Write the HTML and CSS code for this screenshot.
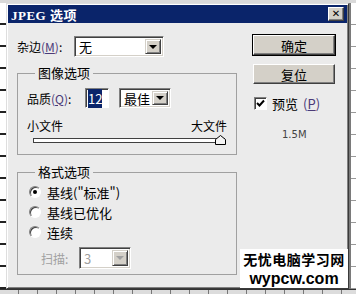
FILE: index.html
```
<!DOCTYPE html>
<html lang="zh-CN">
<head>
    <meta charset="UTF-8">
    <title>JPEG 选项</title>
    <link rel="stylesheet" href="styles.css">
</head>
<body>
    <div class="screen">
        <div class="top-strip"></div>
        <div class="middle">
            <div class="sheet sheet-left"></div>
            <div class="dialog">
                <div class="title-bar">
                    <span class="title-text">JPEG 选项</span>
                    <span class="close-btn">&#x2715;</span>
                </div>
                <div class="dialog-body">
                    <div class="left-col">
                        <div class="matte-row">
                            <span class="matte-label">杂边<span class="key">(<u>M</u>)</span>:</span>
                            <div class="combo combo-matte">
                                <span class="combo-text">无</span>
                                <span class="combo-btn"><i class="arrow"></i></span>
                            </div>
                        </div>

                        <fieldset class="group group-image">
                            <legend>图像选项</legend>
                            <div class="quality-row">
                                <span class="quality-label">品质<span class="key">(<u>Q</u>)</span>:</span>
                                <div class="edit"><span class="sel">12</span></div>
                                <div class="combo combo-quality">
                                    <span class="combo-text">最佳</span>
                                    <span class="combo-btn"><i class="arrow"></i></span>
                                </div>
                            </div>
                            <div class="size-row">
                                <span>小文件</span>
                                <span>大文件</span>
                            </div>
                            <div class="slider">
                                <div class="track"></div>
                                <svg class="thumb" width="11" height="10" viewBox="0 0 11 10">
                                    <path d="M0.5 9.5 V4.5 L5.5 0.5 L10.5 4.5 V9.5 Z" fill="#f4f4f4" stroke="#000"/>
                                </svg>
                            </div>
                        </fieldset>

                        <fieldset class="group group-format">
                            <legend>格式选项</legend>
                            <label class="radio-row"><span class="radio checked"></span>基线("标准")</label>
                            <label class="radio-row"><span class="radio"></span>基线已优化</label>
                            <label class="radio-row"><span class="radio"></span>连续</label>
                            <div class="scan-row">
                                <span class="scan-label">扫描:</span>
                                <div class="combo combo-scan disabled">
                                    <span class="combo-text">3</span>
                                    <span class="combo-btn"><i class="arrow"></i></span>
                                </div>
                            </div>
                        </fieldset>
                    </div>

                    <div class="right-col">
                        <div class="btn btn-default">确定</div>
                        <div class="btn">复位</div>
                        <label class="check-row">
                            <span class="checkbox">
                                <svg width="9" height="9" viewBox="0 0 9 9"><path d="M1 4 L3.5 6.5 L8 1.5" fill="none" stroke="#000" stroke-width="2"/></svg>
                            </span>
                            预览<span class="key">(<u>P</u>)</span>
                        </label>
                        <div class="file-size">1.5M</div>
                    </div>
                </div>
                <div class="watermark">
                    <div class="wm-cn">无忧电脑学习网</div>
                    <div class="wm-en">wypcw.com</div>
                </div>
            </div>
            <div class="sheet sheet-right"></div>
        </div>
        <div class="bottom-strip"></div>
    </div>
</body>
</html>
```

FILE: styles.css
```
* {
    box-sizing: border-box;
}
body {
    margin: 0;
    background: #e6e6e6;
    font-family: "Noto Sans CJK SC", "Liberation Sans", sans-serif;
    font-size: 12px;
    color: #000;
}
.screen {
    width: 356px;
    height: 294px;
    display: flex;
    flex-direction: column;
    overflow: hidden;
}
.top-strip {
    height: 3px;
    background: #d9d9d9;
}
.middle {
    height: 286px;
    display: flex;
}
.sheet {
    background: #fff repeating-linear-gradient(to bottom, transparent 0, transparent 20px, #222 20px, #222 22px);
}
.sheet-left {
    width: 6px;
}
.sheet-right {
    width: 7px;
    background: #fff repeating-linear-gradient(to bottom, transparent 0, transparent 21px, #999 21px, #999 22px);
    border-left: 2px solid #7a7a7a;
}
.bottom-strip {
    height: 5px;
    background: #dcdcdc repeating-linear-gradient(to right, transparent 0, transparent 18px, #777 18px, #777 19px);
    border-top: 1px solid #333;
}

/* окно */
.dialog {
    width: 343px;
    position: relative;
    display: flex;
    flex-direction: column;
    background: #ebebeb;
    border: 1px solid;
    border-color: #dedede #3a3a3a #3a3a3a #dedede;
    box-shadow: inset 1px 1px #fff, inset -1px -1px #808080;
    padding: 1px;
}
.title-bar {
    height: 18px;
    background: #0a246a;
    display: flex;
    align-items: center;
    justify-content: space-between;
    padding: 0 3px 0 3px;
}
.title-text {
    color: #fff;
    font-weight: bold;
    font-size: 13px;
    font-family: "Liberation Serif", "Noto Sans CJK SC", serif;
    letter-spacing: 0.5px;
}
.close-btn {
    width: 16px;
    height: 14px;
    background: #d4d0c8;
    border: 1px solid;
    border-color: #fff #404040 #404040 #fff;
    box-shadow: inset -1px -1px #808080;
    font-size: 10px;
    font-weight: bold;
    line-height: 12px;
    text-align: center;
    font-family: "DejaVu Sans", sans-serif;
}
.dialog-body {
    flex: 1;
    display: flex;
    gap: 16px;
    padding: 13px 0 0 9px;
}
.left-col {
    width: 220px;
    display: flex;
    flex-direction: column;
}
.right-col {
    width: 82px;
    display: flex;
    flex-direction: column;
    margin-top: -1px;
}
.key {
    color: #4a3a78;
}

/* комбобоксы */
.matte-row {
    display: flex;
    align-items: center;
    height: 21px;
}
.matte-label {
    width: 57px;
}
.combo {
    display: flex;
    align-items: center;
    background: #fff;
    border: 1px solid;
    border-color: #808080 #fff #fff #808080;
    box-shadow: inset 1px 1px #404040, inset -1px -1px #d4d0c8;
    padding: 2px 2px 2px 4px;
}
.combo-text {
    flex: 1;
}
.combo-btn {
    width: 16px;
    height: 100%;
    background: #d4d0c8;
    border: 1px solid;
    border-color: #d4d0c8 #404040 #404040 #d4d0c8;
    box-shadow: inset 1px 1px #fff, inset -1px -1px #808080;
    display: flex;
    align-items: center;
    justify-content: center;
}
.arrow {
    width: 0;
    height: 0;
    border-left: 4px solid transparent;
    border-right: 4px solid transparent;
    border-top: 4px solid #000;
}
.combo-matte {
    width: 90px;
    height: 21px;
    font-size: 13px;
}
.combo-quality {
    width: 52px;
    height: 20px;
    font-size: 13px;
    margin-left: 10px;
}
.combo-scan {
    width: 52px;
    height: 22px;
    font-size: 13px;
}
.disabled .combo-text {
    color: #a0a0a0;
}
.disabled .arrow {
    border-top-color: #a0a0a0;
}

/* группы */
.group {
    margin: 0;
    border: 1px solid #a0a0a0;
    padding: 0 9px;
}
.group legend {
    padding: 0 3px;
    margin-left: 8px;
    line-height: 14px;
    font-size: 13px;
}
.group-image {
    margin-top: 9px;
    height: 89px;
}
.quality-row {
    display: flex;
    align-items: center;
    margin-top: 8px;
    height: 20px;
}
.quality-label {
    width: 58px;
}
.edit {
    width: 24px;
    height: 20px;
    background: #fff;
    border: 1px solid;
    border-color: #808080 #fff #fff #808080;
    box-shadow: inset 1px 1px #404040;
    padding: 2px 2px;
    font-size: 13px;
    line-height: 15px;
}
.sel {
    background: #0a246a;
    color: #fff;
}
.size-row {
    display: flex;
    justify-content: space-between;
    margin-top: 11px;
    line-height: 14px;
}
.slider {
    position: relative;
    height: 10px;
    margin: 2px 1px 0 6px;
}
.track {
    position: absolute;
    left: 0;
    right: 1px;
    top: 3px;
    height: 5px;
    background: #fff;
    border: 1px solid #404040;
}
.thumb {
    position: absolute;
    right: 0;
    top: 0;
}

.group-format {
    margin-top: 10px;
    height: 110px;
}
.radio-row {
    display: flex;
    align-items: center;
    gap: 6px;
    height: 20px;
    padding-left: 2px;
    font-size: 13px;
}
.radio-row:first-of-type {
    margin-top: 3px;
}
.radio {
    width: 12px;
    height: 12px;
    border-radius: 50%;
    background: #fff;
    border: 1px solid;
    border-color: #808080 #fff #fff #808080;
    box-shadow: inset 1px 1px #404040;
    display: flex;
    align-items: center;
    justify-content: center;
}
.radio.checked::after {
    content: "";
    width: 4px;
    height: 4px;
    border-radius: 50%;
    background: #000;
}
.scan-row {
    display: flex;
    align-items: center;
    margin-top: 5px;
    padding-left: 14px;
}
.scan-label {
    width: 38px;
    color: #a0a0a0;
}

/* кнопки справа */
.btn {
    height: 20px;
    width: 82px;
    background: #d4d0c8;
    border: 1px solid;
    border-color: #fff #404040 #404040 #fff;
    box-shadow: inset -1px -1px #808080;
    display: flex;
    align-items: center;
    justify-content: center;
    font-size: 13px;
}
.btn-default {
    outline: 1px solid #000;
    outline-offset: 0;
}
.btn + .btn {
    margin-top: 9px;
}
.check-row {
    display: flex;
    align-items: center;
    gap: 5px;
    margin-top: 13px;
    padding-left: 1px;
    font-size: 13px;
    height: 13px;
}
.checkbox {
    width: 13px;
    height: 13px;
    background: #fff;
    border: 1px solid;
    border-color: #808080 #fff #fff #808080;
    box-shadow: inset 1px 1px #404040;
    display: flex;
    align-items: center;
    justify-content: center;
}
.file-size {
    margin-top: 19px;
    padding-left: 29px;
    font-family: "DejaVu Sans", sans-serif;
    font-size: 10px;
    color: #444;
}

/* водяной знак */
.watermark {
    position: absolute;
    right: 0;
    bottom: 0;
    width: 108px;
    background: #fff;
    text-align: center;
    white-space: nowrap;
}
.wm-cn {
    font-weight: bold;
    font-size: 14px;
    line-height: 21px;
    letter-spacing: 0.5px;
}
.wm-en {
    font-family: "Liberation Sans", sans-serif;
    font-weight: bold;
    font-size: 16px;
    line-height: 18px;
}
```
